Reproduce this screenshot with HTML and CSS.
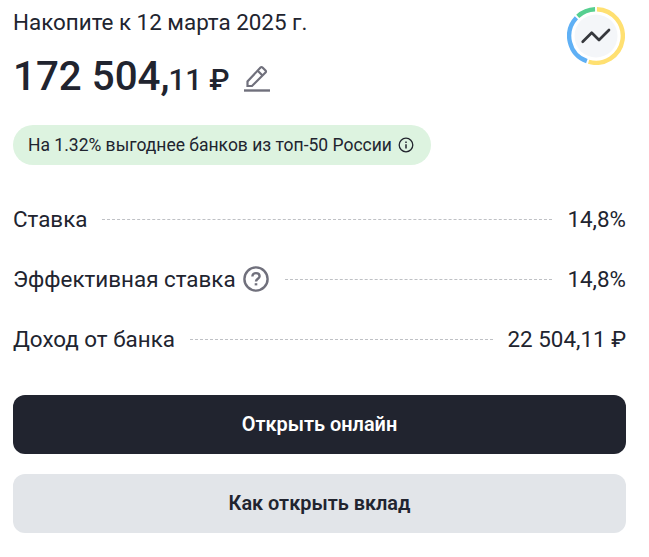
FILE: index.html
```html
<!DOCTYPE html>
<html lang="ru">
<head>
<meta charset="utf-8">
<title>Вклад</title>
<link rel="stylesheet" href="styles.css">
</head>
<body>
<main class="card">
  <header class="head">
    <div class="head-text">
      <div class="title">Накопите к 12 марта 2025 г.</div>
      <div class="amount">
        <span class="amount-int">172 504,</span><span class="amount-frac">11 ₽</span>
        <svg class="edit" width="28" height="28" viewBox="0 0 28 28" fill="none" stroke="#70707c" stroke-width="2.2"><path d="M4.5 17.5 V22 H9 L22.5 8.5 Q23.5 7.5 22.5 6.5 L19.5 3.5 Q18.5 2.5 17.5 3.5 Z"/><path d="M14.5 6.5 L19.5 11.5"/><path d="M1 26.5H27" stroke-width="2.4"/></svg>
      </div>
    </div>
    <svg class="ring" width="58" height="58" viewBox="0 0 58 58" fill="none">
      <circle cx="29" cy="29" r="21.5" fill="#f4f6f9"/>
      <g stroke-width="4.4">
        <path d="M29.94 2.22 A 26.8 26.8 0 1 1 21.61 54.76" stroke="#ffe071"/>
        <path d="M19.83 54.18 A 26.8 26.8 0 0 1 9.4 10.72" stroke="#5fb0f5"/>
        <path d="M10.72 9.4 A 26.8 26.8 0 0 1 28.06 2.22" stroke="#56cf90"/>
      </g>
      <path d="M15.7 34.7 L24.7 25.7 L32 33 L42 23" stroke="#36383d" stroke-width="2.7" stroke-linecap="round" stroke-linejoin="round"/>
    </svg>
  </header>
  <div class="badge">
    <span>На 1.32% выгоднее банков из топ-50 России</span>
    <svg class="info" width="16" height="16" viewBox="0 0 16 16" fill="none" stroke="#22252e" stroke-width="1.3"><circle cx="8" cy="8" r="6.8"/><path d="M8 7.2V11.5" stroke-width="1.5"/><path d="M8 4.4V6" stroke-width="1.5"/></svg>
  </div>
  <dl class="rows">
    <div class="row"><dt>Ставка</dt><span class="dots"></span><dd>14,8%</dd></div>
    <div class="row"><dt>Эффективная ставка</dt>
      <svg class="help" width="26" height="26" viewBox="0 0 26 26" fill="none" stroke="#70707c" stroke-width="2.4"><circle cx="13" cy="13" r="11.6"/><path d="M9.4 10.4 C9.4 8.2 11 7.1 13 7.1 C15 7.1 16.6 8.3 16.6 10.2 C16.6 12.6 13 12.8 13 15.4"/><path d="M13 17.2V19.4" stroke-width="2.6"/></svg>
      <span class="dots"></span><dd>14,8%</dd></div>
    <div class="row"><dt>Доход от банка</dt><span class="dots"></span><dd>22 504,11 ₽</dd></div>
  </dl>
  <div class="actions">
    <button class="btn btn-dark">Открыть онлайн</button>
    <button class="btn btn-light">Как открыть вклад</button>
  </div>
</main>
</body>
</html>
```
FILE: styles.css
```css
* { box-sizing: border-box; }
html, body { margin: 0; padding: 0; background: #fff; }
body { font-family: Roboto, "Noto Sans", sans-serif; color: #21242f; }
.card { width: 649px; height: 557px; padding: 8px 23px 0 13px; display: flex; flex-direction: column; }
.head { display: flex; justify-content: space-between; align-items: flex-start; height: 103px; }
.title { font-size: 22.4px; line-height: 28px; }
.amount { display: flex; align-items: baseline; margin-top: 17px; height: 48px; }
.amount-int { font-size: 40.3px; font-weight: 500; line-height: 48px; }
.amount-frac { font-size: 29.5px; font-weight: 500; margin-left: -1px; white-space: pre; }
.edit { align-self: center; margin-left: 13px; margin-top: 1px; }
.ring { margin-right: 1px; margin-top: -1px; }
.badge { align-self: flex-start; height: 40px; margin-top: 14px; padding: 0 17px 0 15px; background: #ddf3e0; border-radius: 20px; display: flex; align-items: center; gap: 6px; font-size: 17.5px; }
.rows { margin: 39px 0 0; display: flex; flex-direction: column; gap: 30px; }
.row { display: flex; align-items: center; height: 30px; font-size: 22.4px; }
.row dt, .row dd { margin: 0; white-space: pre; }
.dots { flex: 1; border-top: 1px dashed #bfc1c5; margin: 0 15px; }
.help { margin-left: 7px; margin-right: 1px; }
.actions { margin-top: 41px; display: flex; flex-direction: column; gap: 20px; }
.btn { height: 59px; border: 0; padding: 0 0 1px; border-radius: 12px; font: 600 19.9px Roboto, sans-serif; }
.btn-dark { background: #21242f; color: #fff; }
.btn-light { background: #e2e5e9; color: #21242f; }
```
